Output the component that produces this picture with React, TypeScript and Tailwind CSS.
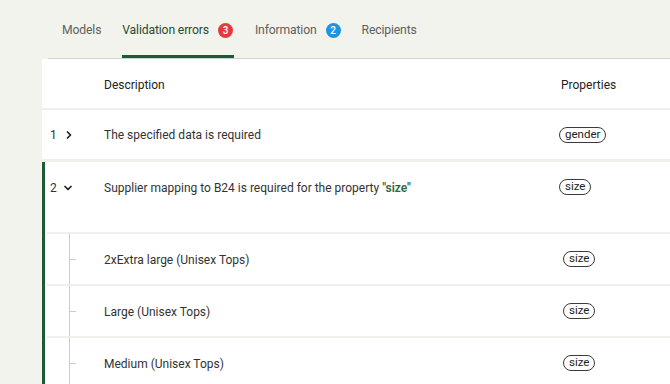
import { ChevronDown, ChevronRight } from "lucide-react";

type Tab = { label: string; count?: number; tone?: "red" | "blue"; active?: boolean };

const tabs: Tab[] = [
  { label: "Models" },
  { label: "Validation errors", count: 3, tone: "red", active: true },
  { label: "Information", count: 2, tone: "blue" },
  { label: "Recipients" },
];

const subRows = ["2xExtra large (Unisex Tops)", "Large (Unisex Tops)", "Medium (Unisex Tops)"];

function Pill({ children }: { children: React.ReactNode }) {
  return (
    <span className="inline-flex h-[16px] items-center rounded-full border-[1.5px] border-[#3a3a3a] px-[5px] text-[11.5px] leading-none text-[#222]">
      {children}
    </span>
  );
}

export default function App() {
  return (
    <div className="h-[384px] w-[670px] overflow-hidden bg-[#f3f3ee] font-['Roboto',sans-serif] text-[#333]">
      <div className="ml-[48px] flex h-[59px] gap-[21px] border-b border-[#d2d2cf] pl-[14px]">
        {tabs.map((t) => (
          <div
            key={t.label}
            className={`flex items-center gap-[9px] pt-[5px] text-[12.2px] tracking-[-0.15px] ${
              t.active ? "border-b-[3px] border-[#1f5a36] pb-0 pr-[1px] text-[#1f4d2e]" : "pb-[3px] text-[#5d615e]"
            }`}
          >
            <span>{t.label}</span>
            {t.count !== undefined && (
              <span
                className={`flex h-[15px] w-[15px] items-center justify-center rounded-full text-[10px] font-medium text-white ${
                  t.tone === "red" ? "bg-[#e5393f]" : "bg-[#1d94e0]"
                }`}
              >
                {t.count}
              </span>
            )}
          </div>
        ))}
      </div>

      <div className="ml-[42px] bg-white text-[12px]">
        <div className="flex h-[51px] items-center border-b-2 border-[#efefec] pt-[3px] text-[#222]">
          <div className="w-[519px] pl-[62px]">Description</div>
          <div>Properties</div>
        </div>

        <div className="flex h-[52px] items-center border-b-[3px] border-[#efefec]">
          <div className="flex w-[62px] items-center gap-[6px] pl-[8px]">
            <span>1</span>
            <ChevronRight size={12} strokeWidth={3.5} className="text-[#222]" />
          </div>
          <div className="w-[455px]">The specified data is required</div>
          <Pill>gender</Pill>
        </div>

        <div className="border-l-[3px] border-[#1f5a36]">
          <div className="flex h-[70px] items-start pt-[17px]">
            <div className="flex w-[59px] items-center gap-[5px] pl-[5px]">
              <span>2</span>
              <ChevronDown size={12} strokeWidth={3.5} className="text-[#222]" />
            </div>
            <div className="w-[455px]">
              Supplier mapping to B24 is required for the property{" "}
              <span className="font-semibold text-[#2a6a3a]">"size"</span>
            </div>
            <Pill>size</Pill>
          </div>

          {subRows.map((label) => (
            <div key={label} className="ml-[2px] flex h-[52px] items-center border-t-2 border-[#efefec]">
              <div className="flex h-full w-[57px] items-center pl-[22px]">
                <div className="flex h-full items-center border-l border-[#c9cdd0]">
                  <div className="h-px w-[6px] bg-[#c9cdd0]" />
                </div>
              </div>
              <div className="w-[459px] pt-[1px]">{label}</div>
              <Pill>size</Pill>
            </div>
          ))}
        </div>
      </div>
    </div>
  );
}
